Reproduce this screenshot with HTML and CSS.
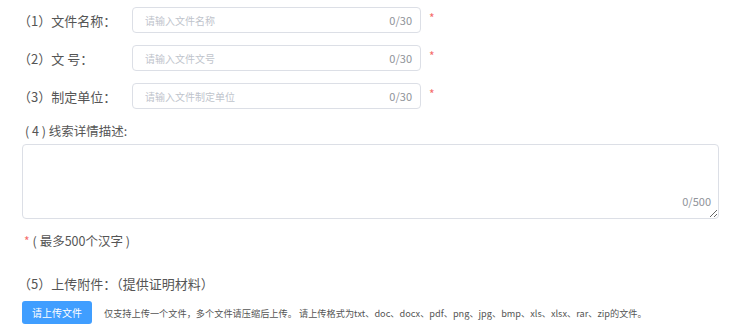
FILE: index.html
```
<!DOCTYPE html>
<html>
<head>
<meta charset="utf-8">
<title>线索上报</title>
<link rel="stylesheet" href="styles.css">
</head>

<body>

<div class="form">

<div class="row">
<div class="label">（1）文件名称：</div>
<div class="input">
<input type="text" placeholder="请输入文件名称">
<span class="count">0/30</span>
</div>
<span class="star">*</span>
</div>

<div class="row">
<div class="label">（2）文 号：</div>
<div class="input">
<input type="text" placeholder="请输入文件文号">
<span class="count">0/30</span>
</div>
<span class="star">*</span>
</div>

<div class="row">
<div class="label">（3）制定单位：</div>
<div class="input">
<input type="text" placeholder="请输入文件制定单位">
<span class="count">0/30</span>
</div>
<span class="star">*</span>
</div>

<div class="block-label">( 4 ) 线索详情描述:</div>
<div class="textarea">
<textarea></textarea>
<span class="count">0/500</span>
</div>

<div class="note"><span class="star">*</span>( 最多500个汉字 )</div>

<div class="upload-label">（5）上传附件：（提供证明材料）</div>
<div class="upload">
<button class="btn">请上传文件</button>
<span class="tip">仅支持上传一个文件，多个文件请压缩后上传。 请上传格式为txt、doc、docx、pdf、png、jpg、bmp、xls、xlsx、rar、zip的文件。</span>
</div>

</div>

</body>
</html>
```

FILE: styles.css
```
body {
  margin: 0;
  font-family: "Noto Sans CJK SC", "Microsoft YaHei", sans-serif;
  color: #555;
  background: #fff;
}

.form {
  padding: 7px 0 0 22px;
  width: 697px;
}

.row {
  display: flex;
  align-items: center;
  height: 26px;
  margin-bottom: 12px;
}

.label {
  width: 110px;
  font-size: 13px;
  margin-left: -4px;
  padding-right: 4px;
}

.input {
  display: flex;
  align-items: center;
  box-sizing: border-box;
  width: 289px;
  height: 26px;
  border: 1px solid #dcdfe6;
  border-radius: 4px;
  padding: 0 8px 0 12px;
}

.input input {
  flex: 1;
  border: none;
  outline: none;
  padding: 0;
  font-family: inherit;
  font-size: 10px;
  color: #606266;
}

.input input::placeholder,
.textarea textarea::placeholder {
  color: #c0c4cc;
}

.count {
  font-size: 11px;
  color: #909399;
}

.star {
  color: #f56c6c;
  font-size: 12px;
  margin-left: 8px;
  align-self: flex-start;
  margin-top: 2px;
}

.block-label {
  font-size: 12.5px;
  margin: 0 0 3px 3px;
  line-height: 20px;
}

.textarea {
  position: relative;
  height: 75px;
}

.textarea textarea {
  box-sizing: border-box;
  width: 697px;
  height: 75px;
  border: 1px solid #dcdfe6;
  border-radius: 4px;
  padding: 6px 10px;
  font-family: inherit;
  font-size: 12px;
  outline: none;
  display: block;
}

.textarea .count {
  position: absolute;
  right: 8px;
  bottom: 10px;
}

.note {
  font-size: 12.5px;
  margin-top: 12px;
  line-height: 20px;
}

.note .star {
  margin-left: 2px;
  margin-right: 3px;
}

.upload-label {
  font-size: 13px;
  margin: 23px 0 0 -4px;
  line-height: 20px;
}

.upload {
  display: flex;
  align-items: center;
  margin-top: 7px;
}

.btn {
  width: 70px;
  height: 23px;
  border: none;
  border-radius: 3px;
  background: #409eff;
  color: #fff;
  font-family: inherit;
  font-size: 10px;
  padding: 0;
}

.tip {
  font-size: 9.2px;
  margin-left: 12px;
  color: #555;
}
```
